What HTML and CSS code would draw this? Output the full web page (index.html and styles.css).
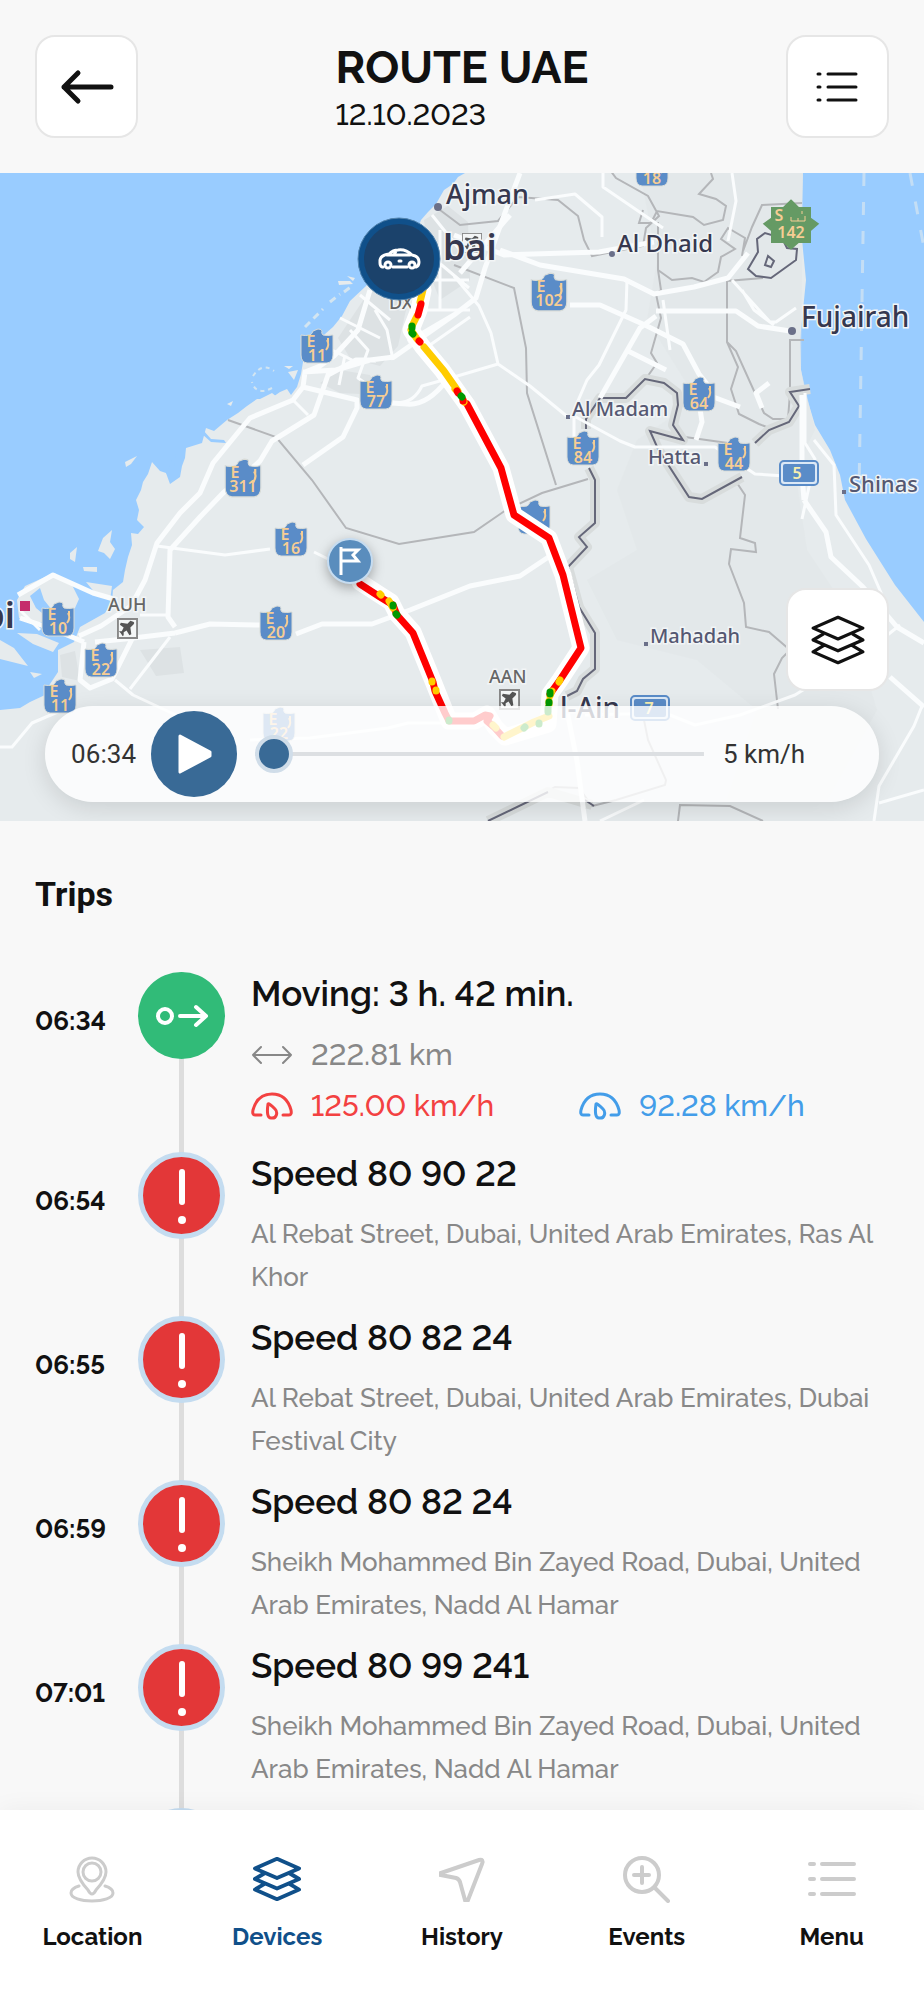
FILE: index.html
```html
<!DOCTYPE html>
<html lang="en">
<head>
    <meta charset="UTF-8">
    <meta name="viewport" content="width=device-width, initial-scale=1">
    <title>Route UAE</title>
    <link rel="stylesheet" href="styles.css">
</head>
<body>
    <header class="header">
        <button class="icon-btn" aria-label="Back">
            <svg width="56" height="40" viewBox="0 0 56 40" fill="none" stroke="#111" stroke-width="5" stroke-linecap="round" stroke-linejoin="round"><path d="M52 20H5M19 6 5 20l14 14"/></svg>
        </button>
        <div class="heading">
            <h1 class="title">ROUTE UAE</h1>
            <div class="date">12.10.2023</div>
        </div>
        <button class="icon-btn" aria-label="Trip list">
            <svg width="44" height="34" viewBox="0 0 44 34" stroke="#111" stroke-width="3" stroke-linecap="round"><path d="M3 4h2M13 4h28M3 17h2M13 17h28M3 30h2M13 30h28"/></svg>
        </button>
    </header>

    <section class="map">
        <svg class="map-canvas" viewBox="0 173 924 648" preserveAspectRatio="xMidYMid slice">
            <defs>
                <symbol id="shield" viewBox="0 0 36 36">
                    <path d="M2 7q4 1 9 0 2-1 3-4l5-2q4 0 4 2-1 2 1 4 5 1 9 0h1v20q0 7-6 8H8q-6-1-6-8z" fill="#5a8cc8" stroke="#d9dcd8"/>
                    <path d="M28 12q3 5-1 10M29 10v4" fill="none" stroke="#f6cd94" stroke-width="2"/>
                </symbol>
                <symbol id="airport" viewBox="0 0 22 22">
                    <path d="M1 1h20v20H1z" fill="#f4f6f6" stroke="#888" stroke-width="2"/>
                    <path d="M17 4q2 1 0 3l-3 3 1 7-2 1-3-5-3 2v3l-1 1-2-3-2-2h3l2-4-4-3 1-2 7 1 3-3z" fill="#555"/>
                </symbol>
            </defs>

            <rect y="173" width="924" height="648" fill="#9cf"/>
            <!-- mainland -->
            <path class="land" d="M465 173L458 177 453 184 444 190 436 204 428 212 421 220 414 240 380 270 366 286 350 301 342 316 333 327 325 334 314 345 303 362 301 374 297 387 291 395 287 389 280 392 270 399 257 399 247 406 238 413 227 420 214 431 206 428 202 443 186 448 185 458 182 466 180 477 170 484 166 473 160 471 152 462 148 474 143 482 141 490 136 500 139 510 137 520 144 527 138 534 131 533 132 545 128 557 125 570 123 582 113 590 112 602 105 613 80 627 74 642 58 650 58 672 50 684 45 695 30 702 20 708 0 710V821H924V622L895 585 866 539 845 500 840 475 830 450 815 425 806 395 801 370 800 340 806 280 801 230 803 173z"/>
            <g class="land">
                <path d="M17 600l8-14 20-9 10-4 4 6 12 4 8 16-4 9-18 9-22 7-16-6z"/>
                <path d="M0 640l14 8 14 18-16-4-12-3zM17 633l20 1 22 9-6 9-20-8zM103 538l9-8-2 12 5 7-5 10-6-6-6-2zM70 553l7-6-2 15-5-3zM83 567h14v5l-13-1zM125 462l12-6-6 8-5 3zM86 582l26 4-2 14-14-6z"/>
                <path d="M258 400l14-7 5 4-15 6zM284 366h9l-4 3zM288 372l10-2-4 10zM338 281h12l3 3-14 1zM347 276l8 2-2 3zM30 672l12 2-8 4zM227 404l6-3-2 5z"/>
            </g>
            <path d="M305 327l18-18M330 302l10-8M344 292l8-6" stroke="#d3e5f1" stroke-width="3" stroke-dasharray="7 5" fill="none"/>
            <path d="M253 376q9-14 21-5M272 388q-16 8-20-6" stroke="#d3e5f1" stroke-width="2" stroke-dasharray="4 4" fill="none"/>
            <path class="sea" d="M203 430l8 9 13 1 2 3-15-1-9-8zM30 596l10-8 4 12 8 10-4 8-12-10zM166 474l6-14 4-6-2 16z"/>
            <path class="urban" d="M370 290l28-5 10 16-10 45-18 20-30-8-12-20zM424 220l24-14 20 16 2 58-30 20-8-20zM320 383l20-13 30 5 10 20-40-2zM140 650l40-3 4 26-28 3zM60 655l15-4 5 30-18-4z"/>
            <path class="relief" d="M640 173h163l-2 197 14 60-20 40 12 80 40 60 30 100-50 90h-100l30-90-60-50-80-20-30-60 50-30-20-60 20-50 60-40-50-80 10-60z"/>

            <!-- ferry lines -->
            <path d="M864 173l-5 320M910 173l14 75" class="ferry"/>

            <!-- emirate boundaries -->
            <g class="border">
                <path d="M228 420l48 17 36 43 34 48 53 16 75-12 32-22 36-17 46-14"/>
                <path d="M454 265l60 23 12 60 1 45 29 92M440 210l20 15 38-4 20-24 40 3 20 16 6 24 8 16 51-10 3-18 13-12-11-20-32-18-15-20M643 210l-4 13h12l6-12 36 6 11 8 19-5 3-14-10-7-17-5 14-15-2-6M658 222v48l3 20-5 4 5 24-10 35 6 10-12 17M658 270l14 10 20-2 12 4 14-10 3-15 14-8-14-10 7-11 17 10-3 18M743 251l9-24 10-22 40-2M763 278l-36 3v61l9 9 28 62 9 6h15l2-26v-53h14M727 342l11 25-7 22 8 25 20 10 10 4M685 437l50 7M735 480l10 15-5 43 15 5 1 9-25-3-2 15 15 39 2 24 23 5 21 18-8 8-8 16 4 35M644 720l4 20 18 40-1 5-49 15-24 6-13-18-24-1-25 14"/>
                <path d="M585 816V805M678 821l2-16 50 1 33 15"/>
            </g>
            <g class="country-halo"><path d="M586 429v-10l14-21h26l19-19 19 4 13 10 1 12-5 20 10 15-33-9 8 18 31 48 13 2 40-22M755 443l14-13 20-8 10-16-9-14 20-3M589 468l6 12v43l-16 14 8 10-19 20 11 40 16 26v36l-12 10-6 12-10 5M488 821l60-29 44 13"/></g>
            <g class="country"><path d="M586 429v-10l14-21h26l19-19 19 4 13 10 1 12-5 20 10 15-33-9 8 18 31 48 13 2 40-22M755 443l14-13 20-8 10-16-9-14 20-3M589 468l6 12v43l-16 14 8 10-19 20 11 40 16 26v36l-12 10-6 12-10 5M488 821l60-29M585 800l9 6"/><path d="M765 233l-8 6 1 13-10 17 8 7 15 2 25-18 1-11-10-1-5-10zM768 256l-3 9 6 2 3-6z"/></g>

            <!-- roads -->
            <g class="road minor">
                <path d="M454 276l25 30 12 27 7 31 32 22 39 32M498 364l-44 13-32 9q-10 20-30 16M627 280l-1 30-27 55-12 15-13 30v40M574 416l46 25 15 6h80l40 27 60 4M603 173v14l60 41M535 200l40-6 27 23v20M732 173l4 28-8 40M732 280l18 20 20 22 6 0 20-14M742 290l12 20 20 15M663 300l7 50M805 393v50l10 16-13 60M814 440l20 25 2 50 33 50 13 30-4 18M157 546l68 9 45-6M314 552l14 7M170 637l-40 52M140 615h27M0 747h12l20-24 28-12M115 680l18 15 60 28M250 740l60-2 78-10 20-5h40M600 821l44-21M874 821l5-35 35-60 8-20M924 790l-45 13M900 625l-25 20-80 50-55 20-45 10-30-12-80 2"/>
                <path d="M350 330l18 20-10 28 28 20M375 310l12 20 6 30M424 250l45 38M440 230v80M424 280h45M420 310h50M430 345l40-28M360 295l30 25M340 318l40 20M322 345l30 15M293 400l15 15M20 610l20 20M345 355l-6 30M432 215l28 35"/>
            </g>
            <g class="road">
                <path d="M520 173l-17 45-18 50-9 30-22 17-60 42-24 3-34 10-33 2M370 290l-12 40-24 26-14 10-15 6-2 15-10 13-43 18-10 12-27 33-13 30-20 20-23 30-12 37-14 26-30 20-22 10M376 360h-20l-28 15-14 40-42 26-12 20-37 32-23 24-30 33-2 67 7 10M303 387l54 13v8l-14 29-40 28M375 402l32 2q20 2 40-24M408 342l46-27M175 633l-50 6-30 3M175 633l35-9 50 1M296 634l26-10h50l38-14 60-24 50-10 30-20M18 595l35-20 40 18 24 7M20 618l30 10 34 14M84 642l-4 38 10 8 22-9 20-40"/>
                <path d="M454 235l50 20 95-3 55-10M500 250l40 15 84 14 30 15 40-7 34-9 20-25M570 305h30l45 20 38 19 16 30 8 10M656 311h80l22 15 32 5M600 398l40-70 16-12M626 350l40 20M699 402l3 20-6 18M762 408l-6-15 13-10M700 392l40 15M804 500l22 32 5 25 32 30 34 40 27 16"/>
                <path d="M890 677l34 30M585 821l-8-60-10-50M802 395v80l2 25M510 215l-50 58"/>
            </g>

            <!-- place labels -->
            <g class="place">
                <circle cx="438" cy="207" r="4"/><circle cx="612" cy="254" r="3"/><circle cx="792" cy="331" r="4"/>
                <rect x="566" y="415" width="4" height="4"/><rect x="704" y="462" width="4" height="4"/><rect x="842" y="490" width="4" height="4"/><rect x="644" y="642" width="4" height="4"/>
                <use href="#airport" x="462" y="233" width="20" height="20"/>
                <text x="446" y="204" font-size="27">Ajman</text>
                <text class="city" x="443" y="260" font-size="36">bai</text>
                <text x="617" y="252" font-size="24">Al Dhaid</text>
                <text x="801" y="327" font-size="28">Fujairah</text>
                <text class="town" x="572" y="416" font-size="20">Al Madam</text>
                <text class="town" x="648" y="464" font-size="20">Hatta</text>
                <text class="town" x="849" y="492" font-size="22">Shinas</text>
                <text class="town" x="650" y="643" font-size="20">Mahadah</text>
                <text x="560" y="718" font-size="28">l-Ain</text>
                <text class="city" x="15" y="628" font-size="36" text-anchor="end">bi</text>
                <text class="code" x="108" y="611" font-size="18">AUH</text>
                <text class="code" x="489" y="683" font-size="18">AAN</text>
                <text class="code" x="389" y="309" font-size="18">DX</text>
            </g>
            <rect x="20" y="601" width="10" height="10" fill="#c52c6c"/>
            <use href="#airport" x="117" y="618" width="21" height="21"/>
            <use href="#airport" x="499" y="689" width="21" height="21"/>

            <!-- road numbers -->
            <g class="shields">
                <use href="#shield" x="299" y="328" width="36" height="36"/><text x="311" y="347">E</text><text x="317" y="361">11</text>
                <use href="#shield" x="358" y="374" width="36" height="36"/><text x="370" y="393">E</text><text x="376" y="407">77</text>
                <use href="#shield" x="223" y="458" width="40" height="40"/><text x="235" y="478">E</text><text x="243" y="492">311</text>
                <use href="#shield" x="273" y="521" width="36" height="36"/><text x="285" y="540">E</text><text x="291" y="554">16</text>
                <use href="#shield" x="258" y="605" width="36" height="36"/><text x="270" y="624">E</text><text x="276" y="638">20</text>
                <use href="#shield" x="40" y="601" width="36" height="36"/><text x="52" y="620">E</text><text x="58" y="634">10</text>
                <use href="#shield" x="83" y="642" width="36" height="36"/><text x="95" y="661">E</text><text x="101" y="675">22</text>
                <use href="#shield" x="42" y="678" width="36" height="36"/><text x="54" y="697">E</text><text x="60" y="711">11</text>
                <use href="#shield" x="261" y="706" width="36" height="36"/><text x="273" y="725">E</text><text x="279" y="739">22</text>
                <use href="#shield" x="634" y="151" width="36" height="36"/><text x="652" y="184">18</text>
                <use href="#shield" x="529" y="272" width="40" height="40"/><text x="541" y="292">E</text><text x="549" y="306">102</text>
                <use href="#shield" x="681" y="376" width="36" height="36"/><text x="693" y="395">E</text><text x="699" y="409">64</text>
                <use href="#shield" x="565" y="430" width="36" height="36"/><text x="577" y="449">E</text><text x="583" y="463">84</text>
                <use href="#shield" x="716" y="436" width="36" height="36"/><text x="728" y="455">E</text><text x="734" y="469">44</text>
                <use href="#shield" x="516" y="499" width="36" height="36"/>
                <path d="M791 202l7 7h11v10l7 5-7 6v11h-11l-7 6-7-6h-11v-11l-7-6 7-5v-10h11z" fill="#659a64" stroke="#659a64" stroke-width="4"/>
                <text x="779" y="221">S</text><path d="M791 217v4h7v-3M798 221h7v-5M802 214v-3" fill="none" stroke="#f6cd94"/><text x="791" y="238">142</text>
                <g fill="#5a8cc8" stroke="#dbe8f6" stroke-width="2"><rect x="782" y="463" width="34" height="20" rx="3"/><rect x="633" y="698" width="34" height="20" rx="3"/></g>
                <g fill="none" stroke="#5a8cc8" stroke-width="2"><rect x="780" y="461" width="38" height="24" rx="4"/><rect x="631" y="696" width="38" height="24" rx="4"/></g>
                <text class="highway" x="797" y="479">5</text><text class="highway" x="649" y="714">7</text>
            </g>

            <!-- travelled route, coloured by speed -->
            <g class="route">
                <path class="casing" d="M423 290l-4 20-8 20 11 16 20 24 25 35 34 63 13 47 35 23 14 37 18 73-21 32-10 14-2 30-43 13-10-10-8-13-12 7h-26l-12-30-4-10-20-49-16-18-6-12-11-7-20-13"/>
                <path class="fast" d="M467 404l34 64 13 47 35 23 14 37 18 73-21 32-10 14"/>
                <path class="fast" d="M502 736l-8-9-7-6 3-5-5-1-11 6h-25l-4-8-10-22-2-9-20-49-16-18-4-10-13-8-20-13"/>
                <path class="medium" d="M423 290l-3 12M417 316l-5 10M411 330l6 9M424 347l20 24 14 20M560 680l-1 2M552 691l-2 5M549 701v4M549 716l-15 6-30 15M496 728l-3-3M455 389l1 1M463 400l1 2M380 594l1 1M389 601l4 7M432 681v1M436 690v1"/>
                <path class="fast" d="M421 304l-3 11M419 341l1 1M457 391l1 2M463 400v1"/>
                <path class="slow" d="M412 326v2M412 333l1 1M461 396l1 1M550 692v2M549 702v1M548 708v4M539 723v1M524 728l1-1M393 605v1M396 614l1 1M449 720v1"/>
            </g>

            <g class="marker-car">
                <circle cx="399" cy="259" r="38" fill="#1b426b" stroke="#10508a" stroke-width="6"/>
                <circle cx="399" cy="259" r="41" fill="none" stroke="#5283ad"/>
                <path d="M383 267h-1q-2-1-2-4v-3q1-5 9-6 4-4 9-4 8-1 14 5 7 1 7 7 0 4-3 5M393 267h14M387 255h23M396 251l-2 4M399 261h2" fill="none" stroke="#fff" stroke-width="3" stroke-linecap="round" stroke-linejoin="round"/>
                <g fill="#1b426b" stroke="#fff" stroke-width="3"><circle cx="388" cy="265" r="3"/><circle cx="412" cy="265" r="3"/></g>
            </g>
            <g class="marker-flag">
                <circle cx="350" cy="561" r="22" fill="#5a8dbd" stroke="#c6dcf0" stroke-width="2"/>
                <path d="M341 575v-28M342 550h16l-5 5 5 6h-16" fill="none" stroke="#fff" stroke-width="3"/>
            </g>
        </svg>

        <button class="icon-btn layers-btn" aria-label="Map layers">
            <svg width="54" height="50" viewBox="0 0 50 46" fill="none" stroke="#111" stroke-width="3" stroke-linejoin="round"><path d="M25 2 48 12 25 22 2 12z"/><path d="M12 17 2 23 25 33 48 23 38 17M12 28 2 34 25 44 48 34 38 28"/></svg>
        </button>

        <div class="player">
            <span class="player-time">06:34</span>
            <button class="play-btn" aria-label="Play">
                <svg width="34" height="40" viewBox="0 0 34 40"><path d="M2 2 32 18v4L2 38z" fill="#fff" stroke="#fff" stroke-width="3" stroke-linejoin="round"/></svg>
            </button>
            <input class="player-range" type="range" min="0" max="100" value="0" aria-label="Route position">
            <span class="player-speed">5 km/h</span>
        </div>
    </section>

    <main class="trips">
        <h2 class="trips-title">Trips</h2>
        <ul class="timeline">
            <li class="trip trip-moving">
                <time class="trip-time">06:34</time>
                <div class="trip-icon moving">
                    <svg width="54" height="24" viewBox="0 0 54 24" fill="none" stroke="#fff" stroke-width="4" stroke-linecap="round" stroke-linejoin="round"><circle cx="10" cy="12" r="7"/><path d="M25 12h26M41 3l10 9-10 9"/></svg>
                </div>
                <div class="trip-body">
                    <h3 class="trip-title">Moving: 3 h. 42 min.</h3>
                    <div class="stat">
                        <svg width="42" height="28" viewBox="0 0 42 28" fill="none" stroke="#888" stroke-width="2" stroke-linecap="round" stroke-linejoin="round"><path d="M2 14h38M10 6l-8 8 8 8M32 6l8 8-8 8"/></svg>
                        222.81 km
                    </div>
                    <div class="stat-row">
                        <div class="stat max">
                            <svg width="42" height="28" viewBox="0 0 42 28" fill="none" stroke="currentColor" stroke-width="3" stroke-linecap="round" stroke-linejoin="round"><path d="M10 23H4q-3 0-2-5C5 7 12 2 21 2s16 5 19 16q1 5-2 5h-6"/><path d="M17 12q-2 14 3 14c6 1 7-6 4-9q-6-6-7-5z"/></svg>
                            125.00 km/h
                        </div>
                        <div class="stat avg">
                            <svg width="42" height="28" viewBox="0 0 42 28" fill="none" stroke="currentColor" stroke-width="3" stroke-linecap="round" stroke-linejoin="round"><path d="M10 23H4q-3 0-2-5C5 7 12 2 21 2s16 5 19 16q1 5-2 5h-6"/><path d="M17 12q-2 14 3 14c6 1 7-6 4-9q-6-6-7-5z"/></svg>
                            92.28 km/h
                        </div>
                    </div>
                </div>
            </li>
            <li class="trip">
                <time class="trip-time">06:54</time>
                <div class="trip-icon alert"><svg width="12" height="58" viewBox="0 0 12 58" fill="#fff"><path d="M3 5q0-3 3-3t3 3v30q0 3-3 3t-3-3z"/><circle cx="6" cy="53" r="4"/></svg></div>
                <div class="trip-body">
                    <h3 class="trip-title">Speed 80 90 22</h3>
                    <p class="address">Al Rebat Street, Dubai, United Arab Emirates, Ras Al Khor</p>
                </div>
            </li>
            <li class="trip">
                <time class="trip-time">06:55</time>
                <div class="trip-icon alert"><svg width="12" height="58" viewBox="0 0 12 58" fill="#fff"><path d="M3 5q0-3 3-3t3 3v30q0 3-3 3t-3-3z"/><circle cx="6" cy="53" r="4"/></svg></div>
                <div class="trip-body">
                    <h3 class="trip-title">Speed 80 82 24</h3>
                    <p class="address">Al Rebat Street, Dubai, United Arab Emirates, Dubai Festival City</p>
                </div>
            </li>
            <li class="trip">
                <time class="trip-time">06:59</time>
                <div class="trip-icon alert"><svg width="12" height="58" viewBox="0 0 12 58" fill="#fff"><path d="M3 5q0-3 3-3t3 3v30q0 3-3 3t-3-3z"/><circle cx="6" cy="53" r="4"/></svg></div>
                <div class="trip-body">
                    <h3 class="trip-title">Speed 80 82 24</h3>
                    <p class="address">Sheikh Mohammed Bin Zayed Road, Dubai, United Arab Emirates, Nadd Al Hamar</p>
                </div>
            </li>
            <li class="trip">
                <time class="trip-time">07:01</time>
                <div class="trip-icon alert"><svg width="12" height="58" viewBox="0 0 12 58" fill="#fff"><path d="M3 5q0-3 3-3t3 3v30q0 3-3 3t-3-3z"/><circle cx="6" cy="53" r="4"/></svg></div>
                <div class="trip-body">
                    <h3 class="trip-title">Speed 80 99 241</h3>
                    <p class="address">Sheikh Mohammed Bin Zayed Road, Dubai, United Arab Emirates, Nadd Al Hamar</p>
                </div>
            </li>
            <li class="trip" aria-hidden="true">
                <div class="trip-time"></div>
                <div class="trip-icon alert"></div>
            </li>
        </ul>
    </main>

    <nav class="tabbar">
        <a class="tab" href="#location">
            <svg width="48" height="48" viewBox="0 0 48 48" fill="none" stroke="#ccc" stroke-width="3" stroke-linecap="round"><circle cx="24" cy="17" r="9"/><path d="M24 39q-2 0-4-4-10-11-10-18a14 14 0 0 1 28 0q0 7-10 18-2 4-4 4z"/><path d="M11 31c-7 2-8 5-8 7 0 5 10 8 21 8s21-3 21-8c0-2-1-5-8-7"/></svg>
            Location
        </a>
        <a class="tab active" href="#devices">
            <svg width="48" height="48" viewBox="0 0 50 50" fill="none" stroke="#10508a" stroke-width="4" stroke-linejoin="round"><path d="M25 4 48 14 25 24 2 14z"/><path d="M12 19 2 25 25 35 48 25 38 19M12 30 2 36 25 46 48 36 38 30"/></svg>
            Devices
        </a>
        <a class="tab" href="#history">
            <svg width="48" height="48" viewBox="0 0 48 48" fill="none" stroke="#ccc" stroke-width="4"><path d="M3 18 41 5q5-1 3 4L30 45h-3l-5-18q-1-3-4-4L3 20z"/></svg>
            History
        </a>
        <a class="tab" href="#events">
            <svg width="48" height="48" viewBox="0 0 48 48" fill="none" stroke="#ccc" stroke-width="4" stroke-linecap="round"><circle cx="19" cy="20" r="17"/><path d="M32 33l13 13M11 20h15M19 12v16"/></svg>
            Events
        </a>
        <a class="tab" href="#menu">
            <svg width="48" height="48" viewBox="0 0 48 48" stroke="#ccc" stroke-width="4" stroke-linecap="round"><path d="M2 9h4M14 9h32M2 24h4M14 24h32M2 39h4M14 39h32"/></svg>
            Menu
        </a>
    </nav>
</body>
</html>
```
FILE: styles.css
```css
* {
    box-sizing: border-box;
}

body {
    margin: 0;
    height: 100vh;
    display: flex;
    flex-direction: column;
    overflow: hidden;
    font-family: Raleway, Lato, sans-serif;
    font-variant-numeric: lining-nums;
    background: #f8f8f8;
    color: #111;
}

h1, h2, h3, p, ul {
    margin: 0;
    padding: 0;
}

button {
    padding: 0;
    cursor: pointer;
}

.header {
    display: flex;
    justify-content: space-between;
    align-items: center;
    padding: 35px;
}

.icon-btn {
    width: 103px;
    height: 103px;
    display: flex;
    align-items: center;
    justify-content: center;
    background: #fff;
    border: 2px solid #e6e6e6;
    border-radius: 20px;
}

.heading {
    padding-top: 6px;
}

.title {
    font-size: 45px;
    line-height: 50px;
    font-weight: 700;
}

.date {
    font-size: 30px;
    line-height: 44px;
    font-weight: 500;
}

/* Map */
.map {
    position: relative;
    flex: none;
    height: 648px;
    overflow: hidden;
}

.map-canvas {
    display: block;
    width: 100%;
    height: 100%;
}

.land {
    fill: #e6ebed;
}

.sea {
    fill: #9cf;
}

.urban {
    fill: #dde2e4;
}

.relief {
    fill: #e1e6e8;
    opacity: 0.6;
}

.ferry {
    fill: none;
    stroke: #c4def5;
    stroke-width: 3;
    stroke-dasharray: 13 16;
}

.border {
    fill: none;
    stroke: #b4b6b9;
    stroke-width: 2;
}

.country {
    fill: none;
    stroke: #656779;
    stroke-width: 2;
}

.country-halo {
    fill: none;
    stroke: #d8dcdc;
    stroke-width: 10;
    stroke-linejoin: round;
}

.road {
    fill: none;
    stroke: #fafcfd;
    stroke-width: 5;
    stroke-linejoin: round;
}

.road.minor {
    stroke-width: 3;
}

.place {
    font-family: "Noto Sans", sans-serif;
    font-weight: 500;
    fill: #36384f;
    stroke: #f2f5f6;
    stroke-width: 3;
    paint-order: stroke;
}

.place circle,
.place rect {
    fill: #6b7089;
    stroke: none;
}

.place .city {
    font-weight: 600;
}

.place .town {
    fill: #555872;
}

.place .code {
    fill: #666;
}

.shields {
    font-family: "Noto Sans", sans-serif;
    font-size: 16px;
    font-weight: 600;
    fill: #f6cd94;
    text-anchor: middle;
}

.shields .highway {
    fill: #f7efb0;
}

.route {
    fill: none;
    stroke-width: 7;
    stroke-linejoin: round;
    stroke-linecap: round;
}

.casing {
    stroke: #fff;
    stroke-width: 17;
}

.fast {
    stroke: #f00;
}

.medium {
    stroke: #fc0;
}

.slow {
    stroke: #090;
}

.marker-flag {
    filter: drop-shadow(0 4px 6px rgba(0, 0, 0, 0.3));
}

.layers-btn {
    position: absolute;
    right: 35px;
    bottom: 130px;
}

.player {
    position: absolute;
    left: 45px;
    right: 45px;
    bottom: 19px;
    height: 96px;
    padding: 0 74px 0 26px;
    display: flex;
    align-items: center;
    background: rgba(255, 255, 255, 0.8);
    border-radius: 48px;
    box-shadow: 0 6px 24px rgba(0, 0, 0, 0.12);
    font-family: Roboto, sans-serif;
    font-size: 26px;
    color: #333;
}

.play-btn {
    flex: none;
    width: 86px;
    height: 86px;
    margin: 0 18px 0 15px;
    padding-left: 2px;
    display: flex;
    align-items: center;
    justify-content: center;
    background: #396a96;
    border: none;
    border-radius: 50%;
}

.player-range {
    flex: 1;
    min-width: 0;
    height: 38px;
    margin: 0 19px 0 0;
    appearance: none;
    background: linear-gradient(#dcdfe2, #dcdfe2) center / 100% 4px no-repeat;
}

.player-range::-webkit-slider-thumb {
    appearance: none;
    width: 38px;
    height: 38px;
    background: #396a96;
    border: 4px solid #d0dde9;
    border-radius: 50%;
}

/* Trips */
.trips {
    flex: 1;
    min-height: 0;
    padding: 53px 35px 0;
    overflow: hidden;
}

.trips-title {
    margin-bottom: 58px;
    font-family: Roboto, sans-serif;
    font-size: 34px;
    line-height: 40px;
    font-weight: 700;
}

.timeline {
    list-style: none;
}

.trip {
    position: relative;
    display: flex;
    align-items: flex-start;
    min-height: 164px;
}

.trip-moving {
    min-height: 180px;
}

.trip::before {
    content: '';
    position: absolute;
    left: 144px;
    top: 0;
    bottom: 0;
    width: 5px;
    background: #ddd;
}

.trip-time {
    width: 103px;
    padding-top: 33px;
    font-size: 26px;
    line-height: 32px;
    font-weight: 700;
}

.trip-icon {
    position: relative;
    flex: none;
    width: 87px;
    height: 87px;
    display: flex;
    align-items: center;
    justify-content: center;
    border-radius: 50%;
}

.moving {
    background: #31bb78;
}

.alert {
    background: #e33738;
    border: 5px solid #c4dcf0;
}

.trip-body {
    flex: 1;
    padding-left: 26px;
}

.trip-title {
    font-size: 35px;
    line-height: 44px;
    font-weight: 600;
}

.stat {
    display: flex;
    align-items: center;
    gap: 18px;
    margin-top: 13px;
    font-size: 30px;
    line-height: 51px;
    font-weight: 500;
    color: #888;
}

.stat-row {
    display: grid;
    grid-template-columns: 1fr 1fr;
    gap: 18px;
}

.stat-row .stat {
    margin-top: 0;
}

.stat.max {
    color: #f34141;
}

.stat.avg {
    color: #439de9;
}

.address {
    margin-top: 17px;
    font-size: 26px;
    line-height: 43px;
    font-weight: 500;
    color: #888;
}

/* Bottom navigation */
.tabbar {
    position: relative;
    flex: none;
    display: grid;
    grid-template-columns: repeat(5, 1fr);
    height: 190px;
    padding-top: 45px;
    background: #fff;
    box-shadow: 0 0 24px rgba(0, 0, 0, 0.05);
}

.tab {
    display: flex;
    flex-direction: column;
    align-items: center;
    gap: 20px;
    font-size: 24px;
    line-height: 28px;
    font-weight: 700;
    color: #111;
    text-decoration: none;
}

.tab.active {
    color: #10508a;
}
```
